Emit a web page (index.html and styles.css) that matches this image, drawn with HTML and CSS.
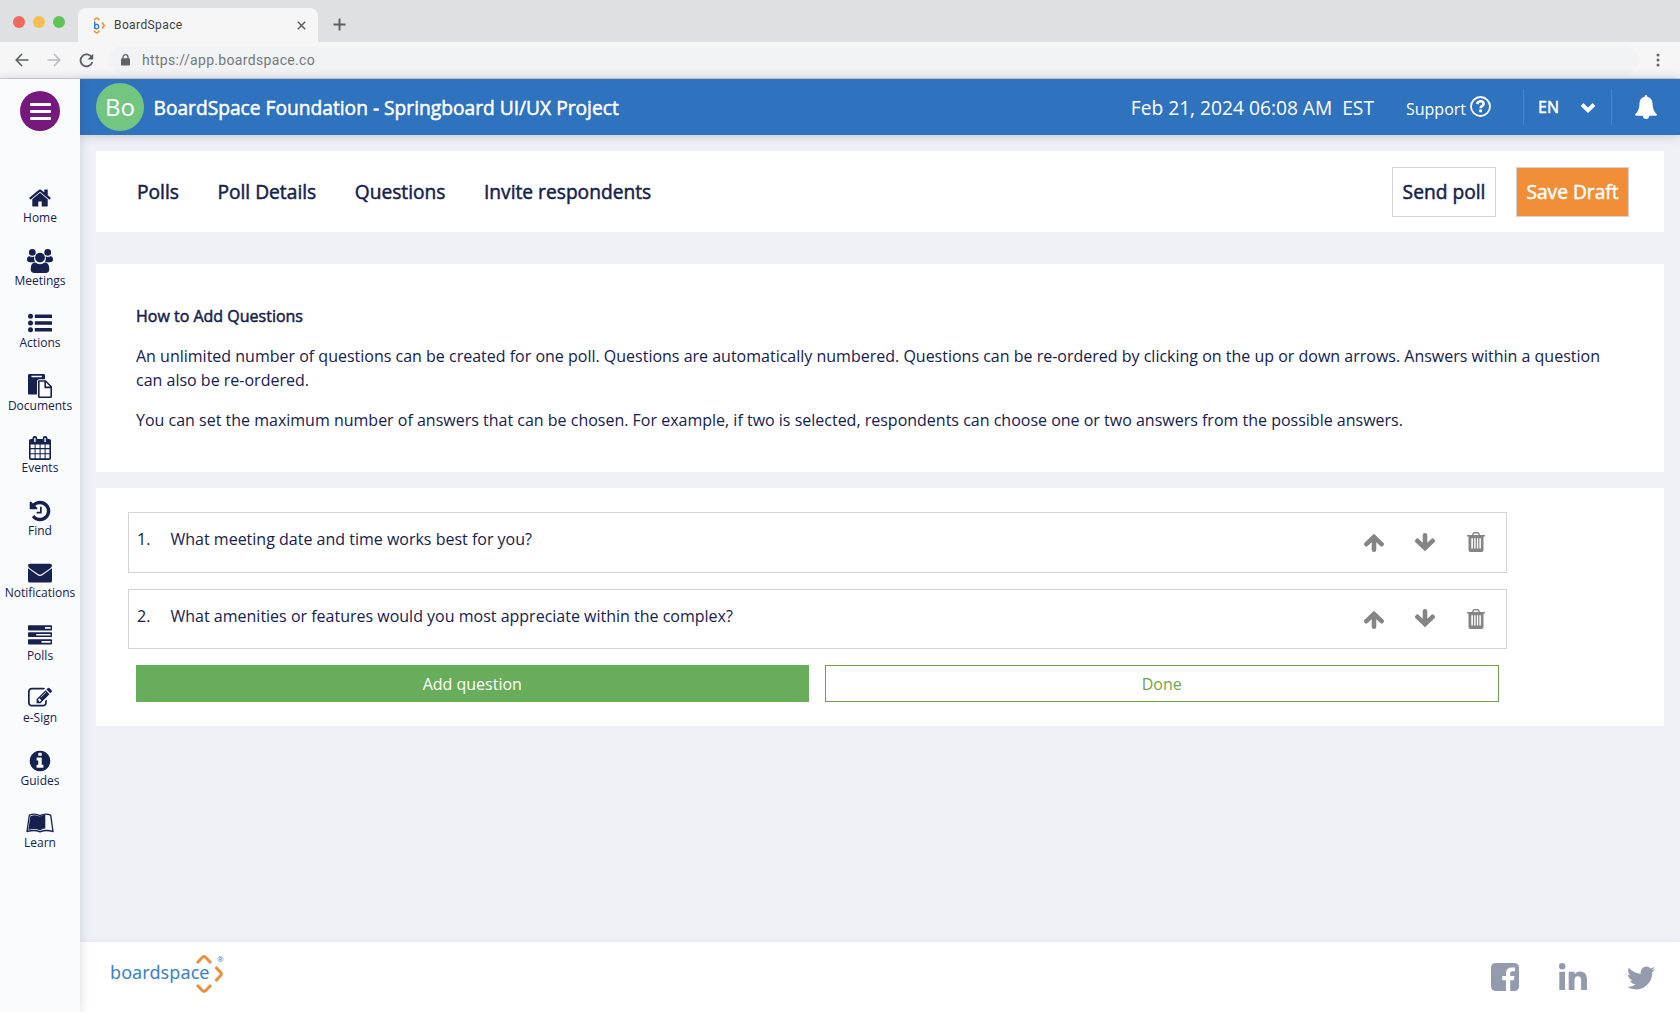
FILE: index.html
```html
<!DOCTYPE html>
<html lang="en">
<head>
<meta charset="utf-8">
<title>BoardSpace</title>
<link rel="stylesheet" href="styles.css">
</head>
<body>
<div class="browser">
  <div class="tabstrip">
    <div class="lights"><i class="light red"></i><i class="light amber"></i><i class="light green"></i></div>
    <div class="tab">
      <svg class="favicon" width="12" height="17" viewBox="0 0 12 17"><g fill="none" stroke="#f08c34" stroke-width="1.5"><path d="M1 3.2 3 1.2h1.500L6.200 3.200"/><path d="M1 13.800 3 15.800h1.500l1.700-2"/><path d="M9 5.500 11.200 8.500 9 11.500"/></g><path d="M1.700 4.500v7.500M1.700 9.500a2 2.300 0 1 1 0 .1" fill="none" stroke="#3b7fc6" stroke-width="1.400"/></svg>
      <span class="tab-title">BoardSpace</span>
      <svg class="tab-close" width="9" height="9" viewBox="0 0 9 9"><path d="M.8.8l7.400 7.400M8.200.8.8 8.200" stroke="#5a5d61" stroke-width="1.500"/></svg>
    </div>
    <svg class="new-tab" width="13" height="13" viewBox="0 0 13 13"><path d="M6.500.5v12M.5 6.500h12" stroke="#5a5d61" stroke-width="1.900"/></svg>
  </div>
  <div class="toolbar">
    <svg width="14" height="14" viewBox="0 0 14 14"><path d="M13.500 7H1.500M7 1 1.200 7 7 13" fill="none" stroke="#5a5d61" stroke-width="1.600"/></svg>
    <svg width="14" height="14" viewBox="0 0 14 14"><path d="M.5 7h12M7 1l5.800 6L7 13" fill="none" stroke="#b9bbbe" stroke-width="1.600"/></svg>
    <svg width="15" height="15" viewBox="0 0 15 15"><path d="M12.800 4.500A6 6 0 1 0 13.300 9" fill="none" stroke="#5a5d61" stroke-width="1.800"/><path d="M14.200.8v5.700H8.500z" fill="#5a5d61"/></svg>
    <div class="omnibox">
      <svg width="9" height="12" viewBox="0 0 9 12"><path d="M2 5V3.200a2.500 2.500 0 0 1 5 0V5" fill="none" stroke="#5f6368" stroke-width="1.300"/><rect y="4.300" width="9" height="7.200" rx="1" fill="#5f6368"/></svg>
      <span>https://app.boardspace.co</span>
    </div>
    <svg class="kebab" width="4" height="14" viewBox="0 0 4 14" fill="#5f6368"><circle cx="2" cy="2" r="1.500"/><circle cx="2" cy="7" r="1.500"/><circle cx="2" cy="12" r="1.500"/></svg>
  </div>
</div>
<div class="app">
  <nav class="sidebar">
    <button class="menu" aria-label="Menu"><i></i><i></i><i></i></button>
    <a class="item"><svg width="24" height="24" viewBox="0 0 1792 1792"><path d="M1472 992v480q0 26-19 45t-45 19h-384v-384h-256v384h-384q-26 0-45-19t-19-45v-480q0-1 .5-3t.5-3l575-474 575 474q1 2 1 6zm223-69l-62 74q-8 9-21 11h-3q-13 0-21-7l-692-577-692 577q-12 8-24 7-13-2-21-11l-62-74q-8-10-7-23.500t11-21.500l719-599q32-26 76-26t76 26l244 204v-195q0-14 9-23t23-9h192q14 0 23 9t9 23v408l219 182q10 8 11 21.500t-7 23.500z"/></svg><span>Home</span></a>
    <a class="item"><svg width="26" height="24" viewBox="0 0 26 24"><circle cx="5.300" cy="3.400" r="3.400"/><circle cx="20.700" cy="3.400" r="3.400"/><path d="M2.400 7.300Q5 8.600 7.400 7.600 6.400 10.200 8 13.200H3.200Q0 13.200 0 10.800 0 7.600 2.400 7.300zM23.600 7.300Q21 8.600 18.600 7.600q1 2.600-.6 5.600h4.800q3.200 0 3.200-2.400 0-3.200-2.400-3.500z"/><circle cx="13" cy="8.600" r="4.900"/><path d="M8.200 13.600Q13 16.800 17.800 13.600 22.300 13.800 22.300 20.200 22.300 24 18.500 24h-11Q3.700 24 3.700 20.200 3.700 13.800 8.200 13.600z"/></svg><span>Meetings</span></a>
    <a class="item"><svg width="24" height="24" viewBox="0 0 24 24"><circle cx="2.500" cy="5.300" r="2.500"/><circle cx="2.500" cy="12" r="2.500"/><circle cx="2.500" cy="18.800" r="2.500"/><rect x="6.800" y="3.600" width="17.200" height="3.500" rx=".4"/><rect x="6.800" y="10.300" width="17.200" height="3.500" rx=".4"/><rect x="6.800" y="17.100" width="17.200" height="3.500" rx=".4"/></svg><span>Actions</span></a>
    <a class="item"><svg width="24" height="24" viewBox="0 0 24 24"><path fill-rule="evenodd" d="M1.200 0h14.600Q17 0 17 1.200V5.200h-5.400Q9 5.200 9 7.800v12.800H1.200Q0 20.600 0 19.400V1.200Q0 0 1.200 0zM3.500 1.700v1.600h10.300V1.700z"/><path fill-rule="evenodd" d="M11 6.200h6.800L24 12.600V22.800Q24 24 22.800 24H11.200Q10 24 10 22.800V7.200Q10 6.200 11 6.200zM11.600 7.800v14.600h10.800v-8.200h-6V7.800zM18 8.600v4h4z"/></svg><span>Documents</span></a>
    <a class="item"><svg width="22" height="24" viewBox="0 0 22 24"><path fill-rule="evenodd" d="M1.800 3H3.500V2Q3.500 0 5.900 0T8.200 2V3h5.600V2Q13.800 0 16.100 0t2.400 2V3h1.700Q22 3 22 4.800V22.200Q22 24 20.200 24H1.800Q0 24 0 22.200V4.800Q0 3 1.800 3zM5.200 2v4h1.400V2zM15.400 2v4h1.400V2zM1.600 8.600v3.500h4V8.600zm5 0v3.500h4V8.600zm5 0v3.500h4V8.600zm5 0v3.500h3.800V8.600zM1.600 13.200v4h4v-4zm5 0v4h4v-4zm5 0v4h4v-4zm5 0v4h3.800v-4zM1.600 18.300v4h4v-4zm5 0v4h4v-4zm5 0v4h4v-4zm5 0v4h3.800v-4z"/></svg><span>Events</span></a>
    <a class="item"><svg width="24" height="24" viewBox="0 0 1792 1792"><path d="M1664 896q0 156-61 298t-164 245-245 164-298 61q-172 0-327-72.500t-264-204.500q-7-10-6.500-22.500t8.500-20.500l137-138q10-9 25-9 16 2 23 12 73 95 179 147t225 52q104 0 198.500-40.500t163.500-109.500 109.500-163.500 40.500-198.500-40.500-198.500-109.500-163.500-163.500-109.500-198.500-40.500q-98 0-188 35.500t-160 101.500l137 138q31 30 14 69-17 40-59 40h-448q-26 0-45-19t-19-45v-448q0-42 40-59 39-17 69 14l130 129q107-101 244.500-156.500t284.500-55.500q156 0 298 61t245 164 164 245 61 298zm-640-288v448q0 14-9 23t-23 9h-320q-14 0-23-9t-9-23v-64q0-14 9-23t23-9h224v-352q0-14 9-23t23-9h64q14 0 23 9t9 23z"/></svg><span>Find</span></a>
    <a class="item"><svg width="24" height="24" viewBox="0 0 24 24"><path d="M2 2.800h20Q24 2.800 24 4.500 24 6 22 7.500L14 13q-2 1.300-4 0L2 7.500Q0 6 0 4.500 0 2.800 2 2.800z"/><path d="M0 7.300 9.300 14q2.700 1.900 5.400 0L24 7.300V19.700q0 1.900-1.900 1.900H1.900Q0 21.600 0 19.700z"/></svg><span>Notifications</span></a>
    <a class="item"><svg width="24" height="24" viewBox="0 0 24 24"><path fill-rule="evenodd" d="M.8 1.300h22.400q.8 0 .8.800v3.600q0 .8-.8.800H.8Q0 6.500 0 5.700V2.100q0-.8.800-.8zM17 3v1.700h5.600V3zM.8 8.300h22.400q.8 0 .8.800v3.200q0 .8-.8.800H.8q-.8 0-.8-.8V9.100q0-.8.800-.8zM8.300 9.900v1.700h14.300V9.900zM.8 15.300h22.400q.8 0 .8.800v3.600q0 .8-.8.800H.8q-.8 0-.8-.8v-3.600q0-.8.800-.8zm12.700 1.800v1.700h9.100v-1.700z"/></svg><span>Polls</span></a>
    <a class="item"><svg width="24" height="24" viewBox="0 0 1792 1792"><path d="M888 1184l116-116-152-152-116 116v56h96v96h56zm440-720q-16-16-33 1l-350 350q-17 17-1 33t33-1l350-350q17-17 1-33zm80 594v190q0 119-84.500 203.500t-203.500 84.500h-832q-119 0-203.500-84.500t-84.500-203.500v-832q0-119 84.500-203.500t203.500-84.500h832q63 0 117 25 15 7 18 23 3 17-9 29l-49 49q-14 14-32 8-23-6-45-6h-832q-66 0-113 47t-47 113v832q0 66 47 113t113 47h832q66 0 113-47t47-113v-126q0-13 9-22l64-64q15-15 35-7t20 29zm-96-738l288 288-672 672h-288v-288zm444 132l-92 92-288-288 92-92q28-28 68-28t68 28l152 152q28 28 28 68t-28 68z"/></svg><span>e-Sign</span></a>
    <a class="item"><svg width="24" height="24" viewBox="0 0 1792 1792"><path d="M1152 1376v-160q0-14-9-23t-23-9h-96v-512q0-14-9-23t-23-9h-320q-14 0-23 9t-9 23v160q0 14 9 23t23 9h96v320h-96q-14 0-23 9t-9 23v160q0 14 9 23t23 9h448q14 0 23-9t9-23zm-128-896v-160q0-14-9-23t-23-9h-192q-14 0-23 9t-9 23v160q0 14 9 23t23 9h192q14 0 23-9t9-23zm640 416q0 209-103 385.500t-279.500 279.500-385.500 103-385.500-103-279.500-279.500-103-385.500 103-385.500 279.500-279.500 385.500-103 385.500 103 279.500 279.500 103 385.500z"/></svg><span>Guides</span></a>
    <a class="item"><svg width="28" height="24" viewBox="0 0 28 24"><path d="M3.300 4.200Q8.500 1.800 14 4.600 19.500 1.800 24.700 4.200L27 20.600Q20 18.300 14 20.800 8 18.300 1 20.600z" fill="none" stroke="#16214d" stroke-width="1.300" stroke-linejoin="round"/><path d="M4.300 5.200Q9 3.300 13.600 5.400 17 3.600 19.300 3.700V17.500Q16.500 17.600 14 19.400 8.500 16.800 2.300 18.900z"/></svg><span>Learn</span></a>
  </nav>
  <div class="main">
    <header class="topbar">
      <div class="avatar">Bo</div>
      <div class="org faux">BoardSpace Foundation - Springboard UI/UX Project</div>
      <div class="clock">Feb 21, 2024 06:08 AM&nbsp; EST</div>
      <div class="support"><span>Support</span><svg width="21" height="21" viewBox="0 0 21 21"><circle cx="10.500" cy="10.500" r="9.500" fill="none" stroke="#fff" stroke-width="1.800"/><path d="M7.100 8Q8 5.200 10.700 5.200q2.900 0 2.900 2.600 0 1.400-1.600 2.200-1.400.7-1.400 2.300" fill="none" stroke="#fff" stroke-width="2.600"/><rect x="9.200" y="13.500" width="2.800" height="2.700" rx=".3" fill="#fff"/></svg></div>
      <div class="lang"><span class="faux">EN</span><svg width="16" height="11" viewBox="0 0 16 11"><path d="M2 2.500 8 8.300l6-5.800" fill="none" stroke="#fff" stroke-width="3.900"/></svg></div>
      <svg class="bell" width="22" height="24" viewBox="0 0 22 24"><path fill="#fff" d="M9.600 1.800Q9.600 0 11 0t1.400 1.800Q17.600 3 17.600 9q0 7 4.400 10.400 0 1.400-1.500 1.400h-6.200Q13.700 24 11 24T7.700 20.800H1.500Q0 20.800 0 19.400 4.400 16 4.400 9q0-6 5.200-7.200z"/></svg>
    </header>
    <div class="content">
      <section class="card steps">
        <a class="faux">Polls</a><a class="faux">Poll Details</a><a class="faux">Questions</a><a class="faux">Invite respondents</a>
        <button class="btn send faux">Send poll</button>
        <button class="btn save faux">Save Draft</button>
      </section>
      <section class="card help">
        <h2 class="faux">How to Add Questions</h2>
        <p>An unlimited number of questions can be created for one poll. Questions are automatically numbered. Questions can be re-ordered by clicking on the up or down arrows. Answers within a question can also be re-ordered.</p>
        <p>You can set the maximum number of answers that can be chosen. For example, if two is selected, respondents can choose one or two answers from the possible answers.</p>
      </section>
      <section class="card questions">
        <div class="question">
          <span class="num">1.</span><span class="text">What meeting date and time works best for you?</span>
          <svg class="up" width="20" height="20" viewBox="0 0 20 20"><path d="M10 17.700V5.500M2.400 12.200 10 4.900l7.600 7.300"/></svg>
          <svg class="down" width="20" height="20" viewBox="0 0 20 20"><path d="M10 3.300V15.500M2.400 8.800 10 16.100l7.600-7.300"/></svg>
          <svg class="trash" width="18" height="20" viewBox="0 0 18 20"><path fill-rule="evenodd" d="M0 3h5l.6-1.800Q6 0 7.300 0h3.400q1.300 0 1.700 1.200L13 3h5v1.500h-1.500V18q0 2-1.800 2H3.300q-1.800 0-1.800-2V4.500H0zM6.500 3h5L11 1.400H7zM4.300 6.300v10.200h1.600V6.300zm2.900 0v10.200h1.400V6.300zm2.700 0v10.200h1.300V6.300zm2.500 0v10.200h1.500V6.300z"/></svg>
        </div>
        <div class="question">
          <span class="num">2.</span><span class="text">What amenities or features would you most appreciate within the complex?</span>
          <svg class="up" width="20" height="20" viewBox="0 0 20 20"><path d="M10 17.700V5.500M2.400 12.200 10 4.900l7.600 7.300"/></svg>
          <svg class="down" width="20" height="20" viewBox="0 0 20 20"><path d="M10 3.300V15.500M2.400 8.800 10 16.100l7.600-7.300"/></svg>
          <svg class="trash" width="18" height="20" viewBox="0 0 18 20"><path fill-rule="evenodd" d="M0 3h5l.6-1.800Q6 0 7.300 0h3.400q1.300 0 1.700 1.200L13 3h5v1.500h-1.500V18q0 2-1.800 2H3.300q-1.800 0-1.800-2V4.500H0zM6.500 3h5L11 1.400H7zM4.300 6.300v10.200h1.600V6.300zm2.900 0v10.200h1.400V6.300zm2.700 0v10.200h1.300V6.300zm2.500 0v10.200h1.500V6.300z"/></svg>
        </div>
        <div class="actions"><button class="add">Add question</button><button class="done">Done</button></div>
      </section>
    </div>
    <footer class="footer">
      <div class="logo"><span class="word">boardspace</span><svg width="30" height="40" viewBox="0 0 30 40"><g fill="none" stroke="#eb8e3d" stroke-width="3"><path d="M2 9 7.500 3.300Q9 2 10.500 3.300L16 9"/><path d="M2 31l5.500 5.700q1.500 1.300 3 0L16 31"/><path d="M20.500 13l5.200 5.500q1.300 1.500 0 3L20.500 27"/></g></svg><sup>®</sup></div>
      <div class="social">
        <svg width="28" height="28" viewBox="0 0 28 28"><path fill-rule="evenodd" d="M5 0h18q5 0 5 5v18q0 5-5 5h-3.800V17.200h3.700l.5-4.200h-4.200v-2.700q0-2 2-2H24V4.600Q23 4.400 21 4.400q-6 0-6 5.600v3h-3.700v4.200H15V28H5q-5 0-5-5V5Q0 0 5 0z"/></svg>
        <svg width="28" height="27" viewBox="0 0 28 27"><path d="M.3 8.800H6V27H.3z"/><circle cx="3.200" cy="3.200" r="3.200"/><path d="M9.700 8.800h5.800v2.500Q17.300 8.400 21 8.400q7 0 7 8.200V27h-5.900v-9.700q0-4-3.200-4-3.400 0-3.400 4V27H9.700z"/></svg>
        <svg class="twitter" width="32" height="32" viewBox="0 0 1792 1792"><path d="M1684 408q-67 98-162 167 1 14 1 42 0 130-38 259.500t-115.500 248.500-184.500 210.500-258 146-323 54.500q-271 0-496-145 35 4 78 4 225 0 401-138-105-2-188-64.500t-114-159.500q33 5 61 5 43 0 85-11-112-23-185.500-111.500t-73.500-205.500v-4q68 38 146 41-66-44-105-115t-39-154q0-88 44-163 121 149 294.500 238.500t371.500 99.500q-8-38-8-74 0-134 94.500-228.500t228.500-94.500q140 0 236 102 109-21 205-78-37 115-142 178 93-10 186-50z"/></svg>
      </div>
    </footer>
  </div>
</div>
</body>
</html>
```
FILE: styles.css
```css
* { box-sizing: border-box; }
html, body { height: 100%; }
body {
  margin: 0;
  display: flex;
  flex-direction: column;
  font: 16px/24px "Open Sans", sans-serif;
  color: #16214d;
  background: #eff1f7;
  overflow: hidden;
}
svg { display: block; flex: none; }
button { font: inherit; color: inherit; padding: 0; margin: 0; border: 0; background: none; }
.faux { -webkit-text-stroke: 0.5px currentColor; white-space: nowrap; }

/* Browser frame */
.browser { flex: none; height: 79px; background: #f6f6f6; border-bottom: 1px solid #d0d1d3; font-family: Roboto, sans-serif; }
.tabstrip { display: flex; height: 42px; padding-left: 13px; background: #dfe0e4; }
.lights { display: flex; gap: 8px; padding-top: 16px; width: 65px; }
.light { width: 12px; height: 12px; border-radius: 50%; }
.red { background: #ec6a5e; }
.amber { background: #f5bf4f; }
.green { background: #61c554; }
.tab { display: flex; align-items: center; align-self: flex-end; width: 240px; height: 34px; padding: 0 12px 0 15px; border-radius: 8px 8px 0 0; background: #f6f6f6; }
.tab-title { margin-left: 9px; font-size: 12px; letter-spacing: .4px; color: #3c4043; }
.tab-close { margin-left: auto; }
.new-tab { margin: 18px 0 0 15px; }
.toolbar { display: flex; align-items: center; height: 36px; padding-left: 15px; gap: 18px; }
.omnibox { display: flex; align-items: center; flex: 1; height: 28px; margin-left: -3px; padding-left: 12px; gap: 12px; border-radius: 14px; background: #f1f3f4; font-size: 14px; letter-spacing: .33px; color: #75787c; }
.kebab { margin-right: 20px; }

/* App frame */
.app { flex: 1; display: flex; min-height: 0; }
.sidebar { flex: none; display: flex; flex-direction: column; align-items: center; width: 80px; background: #f9fbfd; box-shadow: 0 0 10px rgba(40, 40, 60, .18); z-index: 1; }
.menu { display: flex; flex-direction: column; align-items: center; justify-content: center; gap: 4px; width: 40px; height: 40px; margin: 12px 0 55px; border-radius: 50%; background: #75197c; }
.menu i { width: 21px; height: 3px; border-radius: 1px; background: #fff; }
.item { display: flex; flex-direction: column; align-items: center; height: 62.500px; font-size: 12px; line-height: 16px; }
.item svg { fill: #16214d; }
.main { flex: 1; display: flex; flex-direction: column; min-width: 0; }
.topbar { position: relative; flex: none; display: flex; align-items: center; height: 56px; padding-left: 16px; color: #fff; background: #2f72be; box-shadow: 0 0 10px rgba(40, 40, 60, .25); font-size: 19.200px; }
.avatar { width: 48px; height: 48px; border-radius: 50%; background: #73c682; font-size: 24px; line-height: 48px; text-align: center; }
.org { margin-left: 9.500px; padding-top: 2px; }
.clock { margin-left: auto; padding-top: 2px; }
.support { display: flex; align-items: center; gap: 4px; margin-left: 32px; font-size: 16px; }
.support span { padding-top: 3px; }
.support svg { margin-top: -2px; }
.lang { display: flex; align-items: center; gap: 21px; width: 89px; height: 36px; margin-left: 32px; padding-left: 14px; border: solid rgba(255, 255, 255, .14); border-width: 0 1px; font-size: 16px; }
.bell { margin: 0 23px; }

/* Page */
.content { flex: 1; padding: 16px 16px 0; }
.card { background: #fff; }
.steps { display: flex; align-items: center; height: 81px; padding: 0 35px 0 41px; gap: 38.500px; margin-bottom: 32px; font-size: 19.200px; }
.btn { height: 50px; border: 1px solid #d3d3d3; }
.send { width: 104px; margin-left: auto; margin-right: -18.500px; }
.save { width: 113px; color: #fff; background: #f28e36; }
.help { height: 208px; padding: 40px; margin-bottom: 16px; }
.help h2 { margin: 0 0 16px; font-size: 16px; font-weight: 400; }
.help p { margin: 0 0 16px; }
.questions { height: 238px; padding: 24px 157px 0 32px; }
.question { display: flex; align-items: center; height: 60.500px; margin-bottom: 16px; padding: 0 21px 0 8px; border: 1px solid #d3d3d3; }
.num { width: 33.500px; }
.text { flex: 1; }
.num, .text { margin-top: -6px; }
.question svg { fill: none; stroke: #858585; stroke-width: 4.600; stroke-linecap: round; }
.question .up { margin-right: 31px; }
.question .down { margin: -1px 32px 0 0; }
.question .trash { fill: #858585; stroke: none; }
.actions { display: flex; gap: 16px; padding: 0 8px; }
.actions button { flex: 1; height: 37px; }
.add { color: #fff; background: #68ad5c; }
.done { color: #73a54c; border: 1px solid #73a04f; }

.footer { flex: none; display: flex; justify-content: space-between; height: 70px; padding: 12px 23px 0 30px; background: #fff; box-shadow: 0 0 6px rgba(40, 40, 60, .06); }
.logo { display: flex; position: relative; }
.word { margin-top: 6px; margin-right: -15px; font: 18px/24px "Noto Sans", sans-serif; letter-spacing: .08px; color: #3b7fc6; }
.logo sup { position: absolute; right: 1px; top: 1px; font-size: 8px; line-height: 8px; color: #3b7fc6; }
.social { display: flex; align-items: flex-start; gap: 40px; padding-top: 9px; fill: #959bae; }
.twitter { margin: -1px 0 0 -2px; }
```
